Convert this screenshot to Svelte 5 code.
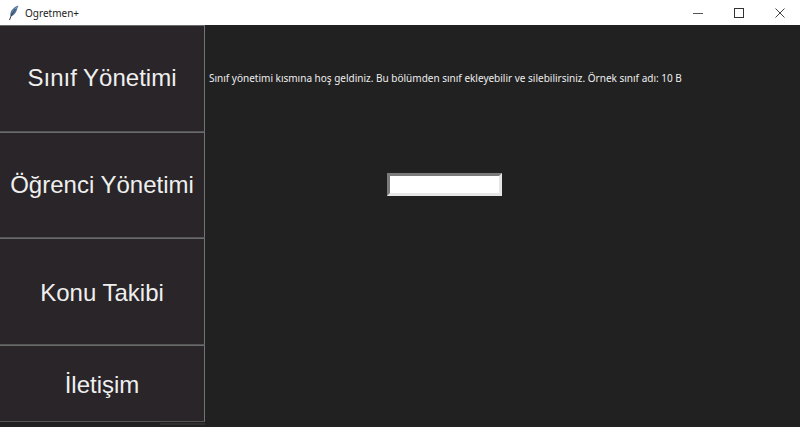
<script>
  const items = [
    { label: 'Sınıf Yönetimi', cls: 'tall' },
    { label: 'Öğrenci Yönetimi', cls: 'tall' },
    { label: 'Konu Takibi', cls: 'tall lowered' },
    { label: 'İletişim', cls: 'short lowered' }
  ];
</script>

<div class="window">
  <header class="titlebar">
    <div class="title">
      <svg class="feather" width="12" height="16" viewBox="0 0 12 16" aria-hidden="true">
        <path d="M10.5 0.5 C7 1.5 3.5 4 2.5 8 C2.2 9.5 2.3 10.8 2.8 11.5 C6 10.5 8.3 7.5 9 4.5 C9.4 3 10 1.5 10.5 0.5 Z" fill="#4f7196" />
        <path d="M9.5 1.5 C7 3 4.5 5.5 3.5 9 C5.5 7.5 7.5 5 8.5 3 Z" fill="#7fa3c7" />
        <path d="M7.5 4 C5 7 3 10.5 1.5 15" fill="none" stroke="#2b3a4a" stroke-width="1" />
      </svg>
      <span>Ogretmen+</span>
    </div>
    <div class="controls">
      <span class="ctl"><svg width="12" height="12" viewBox="0 0 12 12"><path d="M1 6.5H11" stroke="#555" stroke-width="1" /></svg></span>
      <span class="ctl"><svg width="12" height="12" viewBox="0 0 12 12"><rect x="1.5" y="1.5" width="9" height="9" fill="none" stroke="#333" stroke-width="1" /></svg></span>
      <span class="ctl"><svg width="12" height="12" viewBox="0 0 12 12"><path d="M1.5 1.5L10.5 10.5M10.5 1.5L1.5 10.5" stroke="#444" stroke-width="1" /></svg></span>
    </div>
  </header>
  <div class="body">
    <nav class="sidebar">
      {#each items as item}
        <button class="nav {item.cls}">{item.label}</button>
      {/each}
      <div class="sliver"></div>
    </nav>
    <main class="content">
      <p class="msg">Sınıf yönetimi kısmına hoş geldiniz. Bu bölümden sınıf ekleyebilir ve silebilirsiniz. Örnek sınıf adı: 10 B</p>
      <input class="entry" type="text" />
    </main>
  </div>
</div>

<style>
  :global(body) {
    margin: 0;
    background: #212121;
  }
  .window {
    width: 800px;
    height: 427px;
    display: flex;
    flex-direction: column;
    overflow: hidden;
    background: #212121;
  }
  .titlebar {
    height: 25px;
    flex: none;
    background: #fff;
    display: flex;
    justify-content: space-between;
    align-items: center;
  }
  .title {
    display: flex;
    align-items: center;
    gap: 5px;
    padding-left: 8px;
    font: 10px "Noto Sans", sans-serif;
    color: #222;
  }
  .controls {
    display: flex;
    height: 100%;
  }
  .ctl {
    width: 41px;
    display: flex;
    align-items: center;
    justify-content: center;
  }
  .body {
    flex: 1;
    display: flex;
    min-height: 0;
  }
  .sidebar {
    width: 205px;
    flex: none;
    display: flex;
    flex-direction: column;
  }
  .nav {
    box-sizing: border-box;
    flex: none;
    width: 205px;
    padding: 0;
    background: #292528;
    color: #efefef;
    font: 24px "Liberation Sans", Arial, sans-serif;
    border: 1px solid #6e6e6e;
    border-left: 0;
    border-top-color: #6a6a6a;
    border-bottom-color: #555;
    border-right-color: #737373;
  }
  .tall {
    height: 106.5px;
  }
  .short {
    height: 77px;
  }
  .lowered {
    padding-top: 4px;
  }
  .sliver {
    flex: none;
    height: 2px;
    margin: 1px 0 0 160px;
    background: #303030;
  }
  .content {
    flex: 1;
    min-width: 0;
    font: 10px "Noto Sans", sans-serif;
    color: #eee;
  }
  .msg {
    margin: 0;
    padding: 46px 0 0 4px;
    line-height: 14px;
    white-space: nowrap;
  }
  .entry {
    display: block;
    box-sizing: border-box;
    width: 115px;
    height: 23px;
    margin: 88px 0 0 182px;
    padding: 0;
    background: #fff;
    border: 3px solid;
    border-color: #7b7b7b #e6e6e6 #e6e6e6 #7b7b7b;
    outline: none;
  }
</style>
